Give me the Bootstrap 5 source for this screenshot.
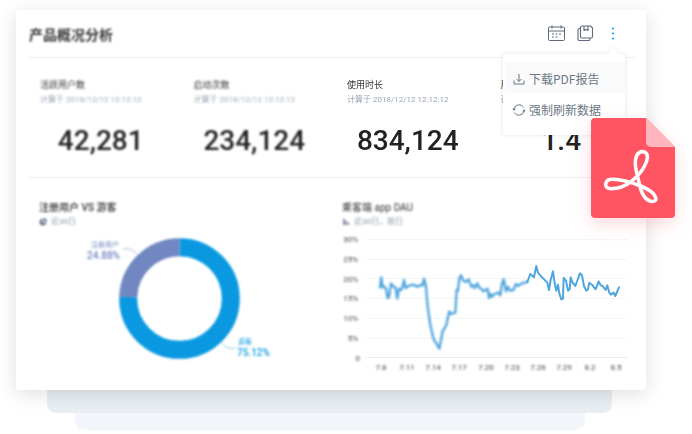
<!DOCTYPE html>
<html lang="zh-CN">
<head>
<meta charset="utf-8">
<meta name="viewport" content="width=device-width, initial-scale=1">
<title>产品概况分析</title>
<link href="https://cdn.jsdelivr.net/npm/bootstrap@5.3.0/dist/css/bootstrap.min.css" rel="stylesheet">
<style>
body { font-family: Roboto, "Noto Sans CJK SC", sans-serif; color: #333; background: #fff; overflow-x: hidden; }
.stage { padding: 10px 46px 0 16px; }
.panel { border-radius: 4px; box-shadow: 0 4px 20px rgba(0,0,0,.13); z-index: 2; padding-bottom: 11px; }
.panel-head { height: 47px; padding: 0 24px 0 13px; }
.panel-title { font-size: 14px; line-height: 20px; filter: blur(1px); padding-top: 2px; }
.rule { height: 1px; margin: 0 11px 0 12px; background: #f0f0f5; box-shadow: 0 0 1px #f0f0f5; }
.tools { gap: 10px; }
.tool { width: 18px; height: 18px; color: #5f6b7c; line-height: 0; }
.tool svg, .menu-item svg { display: block; overflow: visible; flex: none; }
.tool.on { color: #16a0e8; }
.menu { top: 29px; right: -3px; width: 122px; padding: 8px 0 11px; border-radius: 3px; box-shadow: 0 0 5px rgba(0,0,0,.1); z-index: 5; }
.menu::before { content: ""; position: absolute; top: -8px; right: 7px; border: 5px solid transparent; border-top: 0; border-bottom: 8px solid #fff; filter: drop-shadow(0 -1px 1px rgba(0,0,0,.06)); }
.menu-item { height: 31px; margin-left: 2px; padding: 3px 0 0 8px; gap: 4px; font-family: "Noto Sans CJK SC", sans-serif; font-size: 12px; line-height: 16px; color: #6b7785; white-space: nowrap; }
.menu-item.current { background: #fafafa; }
.stats { margin: 0 -8px 0 24px; height: 119px; padding-top: 19px; }
.stat { padding-right: 32px; }
.stat-name { font-size: 9px; line-height: 16px; color: #333; }
.stat-time { font-size: 8px; line-height: 14px; color: #9aa5b5; white-space: nowrap; }
.stat-value { font-size: 28px; line-height: 32px; font-weight: 500; color: #222; margin-top: 18px; }
.soft-3 { filter: blur(1px); }
.soft-2 { filter: blur(.8px); }
.soft-1 { filter: blur(.6px); }
.charts { padding: 22px 1px 0 23px; }
.chart-name { font-size: 10px; line-height: 16px; color: #333; }
.chart-name.strong { font-weight: 500; }
.chart-note { font-size: 8px; line-height: 12px; color: #8d97a8; gap: 4px; }
.plot { display: block; width: 100%; }
.axis { font-size: 8px; fill: #444; }
.part { font-size: 7px; }
.share { font-size: 10px; font-weight: 500; }
.layer-a { height: 23px; margin: 0 34px 0 31px; background: #e8eef2; border-radius: 0 0 9px 9px; }
.layer-b { height: 17px; margin: 0 61px 0 59px; background: #f2f6fa; border-radius: 0 0 9px 9px; }
.pdf { top: 118px; right: 17px; z-index: 6; filter: drop-shadow(0 6px 9px rgba(255,85,98,.22)); }
</style>
</head>
<body>
<main class="stage position-relative">
  <section class="panel bg-white position-relative">
    <header class="panel-head d-flex align-items-center justify-content-between">
      <h1 class="panel-title fw-bold mb-0">产品概况分析</h1>
      <div class="tools d-flex align-items-center position-relative">
        <button class="tool btn p-0 border-0" type="button" aria-label="日期">
          <svg width="18" height="18" viewBox="0 0 18 18" fill="none" stroke="currentColor"><rect x=".5" y="2" width="16" height="13.500" rx="1"/><path d="M.5 6h16M4 .3v3.400M13 .3v3.400"/><path stroke-dasharray="2 1.500" d="M4 9h9.500M4 12h6"/></svg>
        </button>
        <button class="tool btn p-0 border-0" type="button" aria-label="保存">
          <svg width="18" height="18" viewBox="0 0 18 18" fill="none" stroke="currentColor" stroke-width="1.100" stroke-linejoin="round"><path d="M6 1h8.500l2 2v8.500a1.500 1.500 0 0 1-1.500 1.500H6A1.500 1.500 0 0 1 4.500 11.500V2.500A1.500 1.500 0 0 1 6 1z"/><path d="M8 1v4.500l2-1 2 1V1"/><path d="M4.500 3.500H3.500A1.500 1.500 0 0 0 2 5V14A1.500 1.500 0 0 0 3.500 15.500H12.500A1.500 1.500 0 0 0 14 14v-1"/></svg>
        </button>
        <button class="tool on btn p-0 border-0" type="button" aria-label="更多" aria-expanded="true">
          <svg width="18" height="18" viewBox="0 0 18 18" fill="currentColor"><circle cx="9" cy="3.500" r="1.100"/><circle cx="9" cy="8.500" r="1.100"/><circle cx="9" cy="13.500" r="1.100"/></svg>
        </button>
        <div class="menu bg-white position-absolute d-flex flex-column">
          <button class="menu-item current btn border-0 rounded-0 d-flex align-items-center" type="button">
            <svg width="12" height="12" viewBox="0 0 12 12" fill="none" stroke="currentColor"><path d="M6 1v7.500M3.500 6 6 8.500 8.500 6M1 7.500v3.500h10V7.500"/></svg>下载PDF报告</button>
          <button class="menu-item btn border-0 rounded-0 d-flex align-items-center" type="button">
            <svg width="12" height="12" viewBox="0 0 12 12" fill="none" stroke="currentColor"><path d="M1 5a5.200 5.200 0 0 1 9.700-1.500M11 7a5.200 5.200 0 0 1-9.700 1.500"/><path fill="currentColor" stroke="none" d="M-.7 4.500h3.400L1 7zM9.300 7.500h3.400L11 5z"/></svg>强制刷新数据</button>
        </div>
      </div>
    </header>
    <div class="rule"></div>
    <div class="stats row row-cols-4 gx-0">
      <div class="stat soft-3"><div class="stat-name">活跃用户数</div><div class="stat-time">计算于 2018/12/12 12:12:12</div><div class="stat-value text-center">42,281</div></div>
      <div class="stat soft-3"><div class="stat-name">启动次数</div><div class="stat-time">计算于 2018/12/12 12:12:12</div><div class="stat-value text-center">234,124</div></div>
      <div class="stat soft-1"><div class="stat-name">使用时长</div><div class="stat-time">计算于 2018/12/12 12:12:12</div><div class="stat-value text-center">834,124</div></div>
      <div class="stat"><div class="stat-name">用户粘性</div><div class="stat-time">计算于</div><div class="stat-value text-center">1.4</div></div>
    </div>
    <div class="rule"></div>
    <div class="charts row row-cols-2 gx-0">
      <div>
        <div class="soft-3">
          <div class="chart-name strong">注册用户 VS 游客</div>
          <div class="chart-note d-flex align-items-center"><svg width="8" height="8" viewBox="0 0 8 8" fill="#6f7c92"><path d="M3.500.5v4h4A3.500 3.500 0 1 1 3.500.5z"/><path d="M4.500 0A3.500 3.500 0 0 1 8 3.500H4.500z"/></svg>近30日</div>
        </div>
        <svg class="plot" viewBox="39 228 303 151">
          <g class="soft-3" fill="none" stroke-width="18">
            <g transform="rotate(-90 179.500 298.500)">
              <circle cx="179.500" cy="298.500" r="51.300" stroke="#0a99e1" pathLength="100" stroke-dasharray="75.500 24.500"/>
              <circle cx="179.500" cy="298.500" r="51.300" stroke="#7087c2" pathLength="100" stroke-dasharray="24.500 75.500" stroke-dashoffset="-75.500"/>
            </g>
            <path d="M123 249c7-1 10 1 14 5" stroke="#a9b7dd" stroke-width="1"/>
            <path d="M222 343c3 4 6 6 13 5" stroke="#84caf0" stroke-width="1"/>
          </g>
          <g class="soft-3" fill="#7087c2" text-anchor="end"><text class="part" x="119" y="247">注册用户</text><text class="share" x="120" y="259">24.88%</text></g>
          <g class="soft-3" fill="#0a99e1"><text class="part" x="238" y="344">游客</text><text class="share" x="237" y="356">75.12%</text></g>
        </svg>
      </div>
      <div>
        <div class="soft-3">
          <div class="chart-name">乘客端 app DAU</div>
          <div class="chart-note d-flex align-items-center"><svg width="8" height="8" viewBox="0 0 8 8" fill="#8089a6"><path d="M1 1h2v6H1zM3.500 3h2v4h-2zM6 5h1.500v2H6z"/></svg>近30日，按日</div>
        </div>
        <svg class="plot" viewBox="342 228 303 151">
          <g stroke="#f5f5f6"><path d="M366 239.500h261M366 259.500h261M366 278.500h261M366 298.500h261M366 318.500h261M366 338.500h261"/><path d="M366 357.500h261" stroke="#ebebed"/></g>
          <g class="axis soft-3" text-anchor="end"><text x="358" y="242">30%</text><text x="358" y="262">25%</text><text x="358" y="282">20%</text><text x="358" y="301">15%</text><text x="358" y="321">10%</text><text x="358" y="341">5%</text><text x="360" y="361">0</text></g>
          <g class="axis soft-3" text-anchor="middle"><text x="381" y="370">7.8</text><text x="407" y="370">7.11</text><text x="433" y="370">7.14</text><text x="459" y="370">7.17</text><text x="486" y="370">7.20</text><text x="512" y="370">7.23</text><text x="538" y="370">7.26</text><text x="564" y="370">7.29</text><text x="590" y="370">8.2</text><text x="616" y="370">8.5</text></g>
          <g fill="none" stroke="#4fa5de" stroke-linejoin="round" stroke-linecap="round">
            <g class="soft-2"><path transform="translate(320 190) scale(.3333)" stroke-width="7" d="M180 292 184 262 188 292 194 290 198 296 203 324 207 322 213 280 220 290 226 292 232 326 237 296 243 300 248 290 252 270 257 294 266 288 280 284 292 290 302 285 308 286 312 266 318 290 322 340 330 400 340 445 358 476 368 424 378 408 388 364 394 372 406 368 410 300 414 302 418 265 423 256 430 272 438 276 446 268 454 290 460 286 464 294 472 280 478 294 484 296 490 304 503 296 507 324 512 312 516 320 524 312 536 308 541 316 546 280 551 268 558 304 564 290 570 302 580 300 588 282 594 288 606 280 622 276"/></g>
            <g class="soft-1"><path transform="translate(320 190) scale(.3333)" stroke-width="6" d="M622 276 631 252 642 262 649 228 654 248 666 262 682 278 687 300 692 270 699 244 704 280 709 302 714 284 718 310 724 328 729 326 731 264 738 272 744 302 749 298 752 262 758 278 766 288 780 250 786 256 792 288 799 302 804 298 808 278 818 286 827 298 836 274 842 286 848 288 857 300 862 286 868 308 873 314 881 308 886 318 897 292"/></g>
          </g>
        </svg>
      </div>
    </div>
  </section>
  <div class="layer-a"></div>
  <div class="layer-b"></div>
  <svg class="pdf position-absolute" width="84" height="100" viewBox="0 0 84 100" role="img" aria-label="PDF">
    <path fill="#ff5562" d="M4 0H55L84 29V96a4 4 0 0 1-4 4H4a4 4 0 0 1-4-4V4a4 4 0 0 1 4-4z"/>
    <path fill="#ffb7bd" d="M55 0 84 29H60a5 5 0 0 1-5-5z"/>
    <svg x="9" y="27" width="62" height="62" viewBox="0 0 186 186"><path fill="none" stroke="#fff" stroke-width="10.500" stroke-linejoin="round" d="M35 103C64 102 94 112 122 123C144 132 162 142 167 157C170 169 160 171 150 168C132 162 122 138 117 112C112 88 102 66 107 42C110 24 122 17 134 21C147 27 143 46 134 62C124 82 110 96 94 109C76 124 52 131 32 131C20 131 14 122 18 113C21 106 28 103 35 103z"/></svg>
  </svg>
</main>
<script src="https://cdn.jsdelivr.net/npm/bootstrap@5.3.0/dist/js/bootstrap.bundle.min.js"></script>
</body>
</html>
